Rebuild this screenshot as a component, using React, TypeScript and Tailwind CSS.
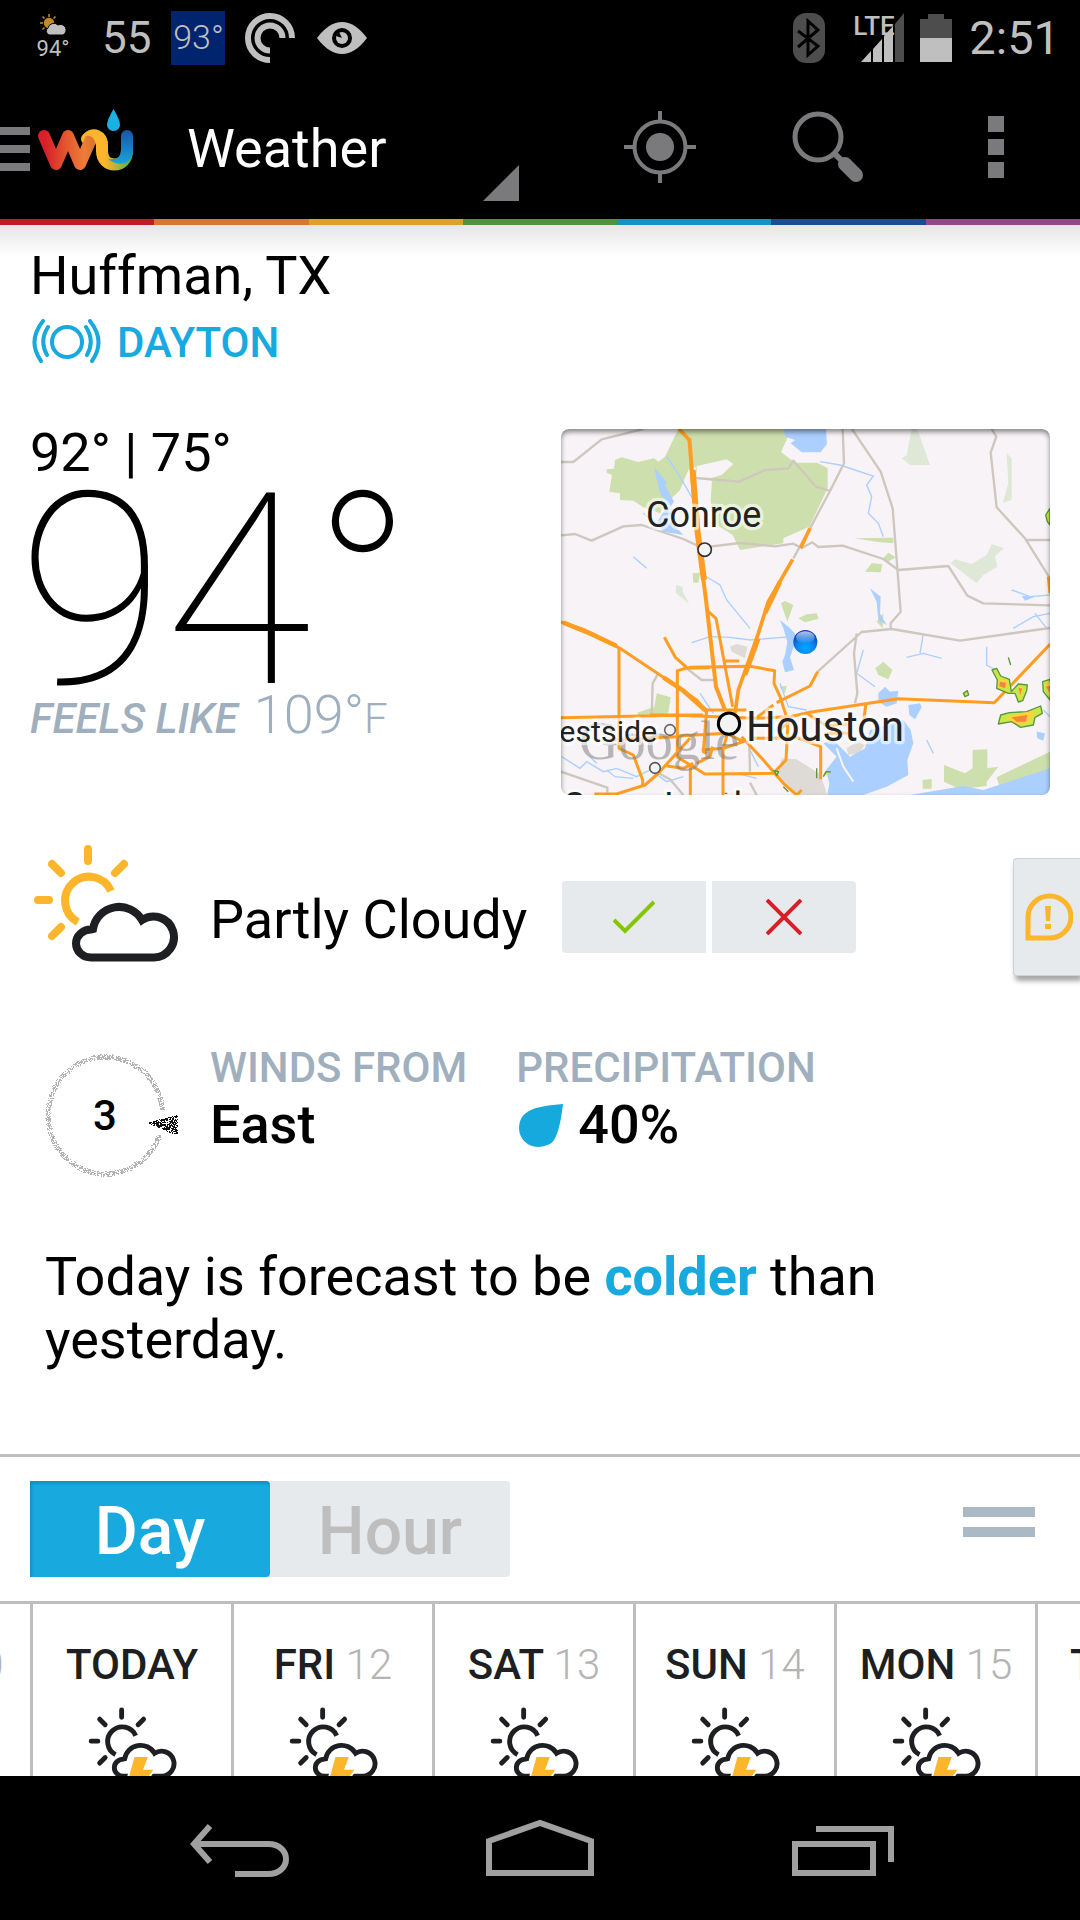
import { useMemo, useState } from 'react';
import clsx from 'clsx';

type Forecast = { day: string; date?: string };

const FORECAST: Forecast[] = [
  { day: 'WED', date: '10' },
  { day: 'TODAY' },
  { day: 'FRI', date: '12' },
  { day: 'SAT', date: '13' },
  { day: 'SUN', date: '14' },
  { day: 'MON', date: '15' },
  { day: 'TUE', date: '16' },
];

export default function App() {
  return (
    <div className="flex h-screen flex-col overflow-hidden bg-white font-['Roboto',sans-serif] text-black">
      <StatusBar />
      <ActionBar />
      <main className="relative flex min-h-0 flex-1 flex-col overflow-hidden">
        <div className="pointer-events-none absolute inset-x-0 top-0 h-8 bg-linear-to-b from-black/10 to-transparent" />
        <Location />
        <Current />
        <Conditions />
        <Wind />
        <p className="mt-[64px] pr-[30px] pl-[45px] text-[54px] leading-[63px]">
          Today is forecast to be <b className="font-bold text-[#18a9df]">colder</b> than yesterday.
        </p>
        <DailyForecast />
      </main>
      <NavBar />
    </div>
  );
}

function StatusBar() {
  return (
    <div className="flex h-[75px] shrink-0 items-center bg-black pr-[20px] pl-[34px] text-[#bfbfbf]">
      <div className="flex w-[38px] flex-col items-center">
        <svg viewBox="0 0 26 22" className="h-[22px] w-[26px]">
          <g stroke="#c28a24" strokeWidth="1.5">
            <circle cx="9" cy="9" r="4.5" fill="#c28a24" />
            <path d="M9 0v3M2.500 2.500l2 2M0 9h3M2.500 15.500l2-2M15.500 2.500l-2 2" />
          </g>
          <path d="M9 21a4 4 0 0 1-1-7 6 6 0 0 1 10-3 5 5 0 0 1 5 10z" fill="#bfbfbf" stroke="#000" />
        </svg>
        <span className="text-[22px] leading-[26px]">94°</span>
      </div>
      <span className="ml-[30px] text-[44px] leading-[50px]">55</span>
      <span className="ml-[20px] flex h-[54px] w-[54px] items-center justify-center bg-[#00246e] text-[34px] font-light">
        93°
      </span>
      <svg viewBox="0 0 50 50" className="ml-[20px] h-[50px] w-[50px]" fill="none" stroke="#bfbfbf" strokeWidth="6">
        <path d="M25 47A22 22 0 1 1 47 25" />
        <path d="M25 37.500A12.500 12.500 0 1 1 37.500 25" />
      </svg>
      <svg viewBox="0 0 50 32" className="ml-[22px] h-[32px] w-[50px]">
        <path d="M0 16Q12 0 25 0T50 16Q38 32 25 32T0 16z" fill="#bfbfbf" />
        <circle cx="25" cy="16" r="10" />
        <circle cx="25" cy="16" r="6" fill="#bfbfbf" />
        <path d="M25 16l-3-6-3 4z" />
      </svg>

      <svg viewBox="0 0 32 50" className="ml-auto h-[50px] w-[32px]" fill="none">
        <rect width="32" height="50" rx="13" fill="#4d4d4d" />
        <path d="M5 18l20 15-10 9V8l10 9L5 34" stroke="#000" strokeWidth="3" />
      </svg>
      <div className="relative ml-[28px]">
        <span className="absolute top-0 left-0 text-[26px] leading-[26px] font-medium">LTE</span>
        <svg viewBox="0 0 52 50" className="h-[50px] w-[52px]" fill="#bfbfbf">
          <path d="M8 49l10-11v11zM20 49V36l9-10v23zM31 49V23l9-10v36z" />
          <path d="M42 49V11l9-11v49z" fill="#4d4d4d" />
        </svg>
      </div>
      <svg viewBox="0 0 32 50" className="ml-[15px] h-[50px] w-[32px]">
        <path d="M0 6h8V1h16v5h8v20H0z" fill="#4d4d4d" />
        <path d="M0 25h32v24H0z" fill="#bfbfbf" />
      </svg>
      <time className="ml-[17px] text-[47px] leading-[50px]">2:51</time>
    </div>
  );
}

function Logo() {
  return (
    <svg viewBox="36 106 100 66" className="h-[66px] w-[100px]" fill="none" strokeLinecap="round" strokeLinejoin="round">
      <defs>
        <linearGradient id="warm" gradientUnits="userSpaceOnUse" x1="40" y1="0" x2="92" y2="0">
          <stop offset="0.100" stopColor="#d81f2a" />
          <stop offset="0.500" stopColor="#e2572f" />
          <stop offset="0.850" stopColor="#f07c36" />
          <stop offset="1" stopColor="#d9772f" />
        </linearGradient>
        <linearGradient id="lime" gradientUnits="userSpaceOnUse" x1="100" y1="0" x2="130" y2="0">
          <stop offset="0.150" stopColor="#fdb52c" />
          <stop offset="1" stopColor="#5eb147" />
        </linearGradient>
        <linearGradient id="cool" gradientUnits="userSpaceOnUse" x1="0" y1="130" x2="0" y2="165">
          <stop offset="0" stopColor="#1b57a8" />
          <stop offset="1" stopColor="#17a8df" />
        </linearGradient>
      </defs>
      <path d="M87 138Q92 133 97 135T102 145V150C102 168 127 168 127 150" stroke="url(#lime)" strokeWidth="12" />
      <path d="M44 135L56 163L68 135L80 163L91 138" stroke="url(#warm)" strokeWidth="12" />
      <path d="M85 135Q97 124 106 136Q108 139 108 150H96V144Q94 133 85 135z" fill="#fdb52c" />
      <path d="M121 135a6 6 0 0 1 12 0V149C133 161 122 168 108 158Q121 160 121 149z" fill="url(#cool)" />
      <path d="M113.500 108Q120 119 120 124a6.500 6 0 0 1-13 0Q107 119 113.500 108z" fill="#1cb0e2" />
    </svg>
  );
}

function ActionBar() {
  return (
    <header className="shrink-0 bg-black">
      <div className="flex h-[144px] items-center">
        <button aria-label="Open menu" className="flex items-center gap-[6px]">
          <span className="flex w-[30px] flex-col gap-[10px] pt-[3px]">
            <i className="h-[8px] bg-[#7a7a7c]" />
            <i className="h-[8px] bg-[#7a7a7c]" />
            <i className="h-[8px] bg-[#7a7a7c]" />
          </span>
          <span className="pb-[14px]">
            <Logo />
          </span>
        </button>
        <button className="ml-[51px] flex h-full flex-1 items-center justify-between text-[54px] text-white">
          <h1 className="pt-[3px]">Weather</h1>
          <svg viewBox="0 0 36 36" className="mb-[18px] h-[36px] w-[36px] self-end">
            <path d="M36 0V36H0z" fill="#7a7a7c" />
          </svg>
        </button>
        <button aria-label="My location" className="ml-[105px]">
          <svg viewBox="0 0 72 72" className="h-[72px] w-[72px]" fill="none" stroke="#7a7a7c" strokeWidth="4">
            <circle cx="36" cy="36" r="25.500" />
            <circle cx="36" cy="36" r="14" fill="#7a7a7c" stroke="none" />
            <path d="M36 0v10M36 62v10M0 36h10M62 36h10" />
          </svg>
        </button>
        <button aria-label="Search" className="ml-[96px]">
          <svg viewBox="0 0 72 72" className="h-[72px] w-[72px]" fill="none" stroke="#7a7a7c">
            <circle cx="26" cy="26" r="23" strokeWidth="5" />
            <path d="M41 41l9 9" strokeWidth="6" />
            <path d="M53 53l11 11" strokeWidth="14" strokeLinecap="round" />
          </svg>
        </button>
        <button aria-label="More options" className="mr-[76px] ml-[124px] flex flex-col gap-[7px]">
          <i className="h-[16px] w-[16px] bg-[#7a7a7c]" />
          <i className="h-[16px] w-[16px] bg-[#7a7a7c]" />
          <i className="h-[16px] w-[16px] bg-[#7a7a7c]" />
        </button>
      </div>
      <div className="grid h-[6px] grid-cols-7">
        <i className="bg-[#be1c26]" />
        <i className="bg-[#d6782f]" />
        <i className="bg-[#dca02b]" />
        <i className="bg-[#50903f]" />
        <i className="bg-[#1693c4]" />
        <i className="bg-[#154e92]" />
        <i className="bg-[#994689]" />
      </div>
    </header>
  );
}

function Location() {
  return (
    <section className="px-[30px] pt-[19px]">
      <h2 className="text-[54px] leading-[64px]">Huffman, TX</h2>
      <a href="#station" className="mt-[10px] flex items-center gap-[15px] text-[42px] leading-[50px] font-medium text-[#18a9df]">
        <svg viewBox="0 2 72 48" className="h-[48px] w-[72px]" fill="none" stroke="#18a9df" strokeWidth="4" strokeLinecap="round">
          <circle cx="37" cy="25" r="15" />
          <path d="M18 10Q9 24 17 38M13 4Q-3 24 11 44M56 10Q65 24 57 38M60 4Q76 24 62 44" />
        </svg>
        DAYTON
      </a>
    </section>
  );
}

function Current() {
  return (
    <section className="mt-[53px] flex items-start justify-between px-[30px]">
      <div>
        <p className="text-[54px] leading-[64px]">92° | 75°</p>
        <p className="mt-[14px] -ml-3 text-[268px] leading-[184px] font-thin">94°</p>
        <p className="flex items-baseline leading-[64px] text-[#a0afbd]">
          <span className="text-[42px] font-medium italic">FEELS LIKE</span>
          <span className="ml-[16px] text-[54px] font-light">109°</span>
          <span className="text-[42px] font-light">F</span>
        </p>
      </div>
      <RadarMap />
    </section>
  );
}

function RadarMap() {
  return (
    <div className="relative mt-2 h-[366px] w-[489px] shrink-0 overflow-hidden rounded-lg">
      <svg viewBox="33 27 1467 1098" className="h-full w-full" fill="none">
        <defs>
          <radialGradient id="pin" cx="0.500" cy="0.750" r="0.700">
            <stop offset="0" stopColor="#00a8ff" />
            <stop offset="0.500" stopColor="#0b84ee" />
            <stop offset="1" stopColor="#0b3db0" />
          </radialGradient>
          <linearGradient id="shine" x1="0" y1="0" x2="0" y2="1">
            <stop offset="0" stopColor="#fff" stopOpacity="0.700" />
            <stop offset="1" stopColor="#fff" stopOpacity="0" />
          </linearGradient>
        </defs>
        <path d="M33 27H1500V1125H33z" fill="#f7f3f7" />

        {/* Parks and forest */}
        <g fill="#cddfac">
          <path d="M425 27H705L712 55L693 96L735 128H802L833 145V205L778 320L700 355V370L570 390L548 345L490 308L482 240L486 182L440 170L437 140L415 150L390 210L350 250L330 280L280 262L250 242L210 240V220L178 215L186 165L170 158V148L192 146L195 120L215 112L265 126L312 115L325 125L345 110L385 27z" />
          <path d="M693 550L705 543L730 555L712 605zM745 595L770 583L800 580L806 596L765 607zM912 355L1030 353V370L985 366zM945 455L965 430L997 433L992 457zM1000 415L1015 398L1037 412L1015 425zM428 460L450 458L445 488H430zM320 820L362 832L355 880L312 868zM976 745L1000 725L1027 750L1015 778L985 765zM980 605L1000 580L998 625zM262 878L310 862L362 885H265zM688 800L710 797L705 820z" />
          <path d="M1182 1035L1245 1060L1268 1045V990L1312 988V1045L1345 1040L1310 1085V1098L1230 1108L1182 1085zM1340 1072L1500 995V1050L1350 1103zM1118 1080L1145 1077V1106H1118z" />
        </g>
        <path d="M1085 27H1102L1140 135H1080L1055 115L1070 105zM1202 430L1215 418L1265 432L1310 405L1325 372L1362 385L1335 408L1342 440L1300 465L1280 490zM1370 100L1385 115V240L1358 248L1365 225L1375 190zM378 495L398 500V515L418 552L378 520z" fill="#dfe8d6" />
        <path d="M440 138L530 118L550 132L515 165L470 178L440 172z" fill="#f7f3f7" />
        <path d="M695 1015L740 1018L810 1062L832 1125H740L680 1075zM890 985L920 965L945 975L925 1000L895 1005zM540 680L560 672L592 680L585 715L545 695z" fill="#dedad5" />

        {/* Water */}
        <g fill="#abcfff">
          <path d="M702 27H828L831 72L812 97H755L722 70L735 60L705 50zM312 142L350 185L345 195L372 245L360 262L330 220z" />
          <path d="M690 600L715 620L735 640V670L720 712L732 750L705 757L697 725L705 705L712 665L700 625z" />
          <path d="M820 970L850 960L900 1010L945 985L960 930L1060 900L1082 930L1090 970L1072 1020L1075 1065L1010 1100L940 1125H832L838 1090L828 1050L860 1010z" />
          <path d="M1080 1125L1240 1098L1300 1110L1500 1045V1125zM1075 855L1110 850L1115 862L1095 898L1078 885zM960 505L992 530L990 580L1010 615L985 600L980 545zM985 820L1005 800L1020 815L1045 812L1040 850L1010 860L985 845zM1460 935L1485 940L1480 962L1462 955zM1415 527L1455 530L1425 542zM350 260L375 270L372 315L400 345L340 335L320 310z" />
        </g>
        <path d="M860 985L880 1040L910 1085" stroke="#f7f3f7" strokeWidth="6" />
        <g stroke="#abcfff" strokeWidth="4">
          <path d="M810 125L870 135L970 168L950 195L965 230L955 280L985 310L1000 350M460 465L510 495L530 540L600 625M425 668L480 650L540 652L600 660L725 650M250 410L290 445M1070 712L1120 700L1175 715M1310 680V735L1338 750M1390 625L1450 590L1500 580M1455 580L1490 625M1385 510L1440 530L1500 525M280 280L335 325L360 330M350 110L390 170L430 240L440 270M450 820L490 880" />
          <path d="M35 1010L90 1045L110 1025L160 1055L200 1045L260 1070L300 1050L350 1085L400 1070M170 1050L195 1070L250 1075M120 1010L140 1030M560 1060L620 1075M600 990L625 1040M690 790L715 860L770 870M850 900L860 950" />
          <path d="M940 690L920 760L975 800M1120 640L1110 700M1130 960L1150 1000M1480 870L1500 890" />
        </g>

        {/* Minor roads */}
        <g stroke="#cdc7be" strokeWidth="7" strokeLinejoin="round">
          <path d="M33 126H70L155 58L280 27M437 174L568 185L645 150L715 145L730 122L798 200L840 213L882 130L878 27M840 213L780 325L730 415M906 27L992 155L1028 265L1042 445L1052 575L1022 610V627" />
          <path d="M33 346L75 342L125 362L220 319L275 315L400 357L455 383L570 369L675 379L730 371L755 384L787 367L805 381L878 377L1000 417L1045 450L1195 438L1252 527L1300 550L1500 556" />
          <path d="M1325 27L1339 50L1322 98L1340 262L1425 355L1500 475M1430 360H1500M803 755L935 636L1025 627L1230 662L1500 624M920 640L912 700L922 820L915 850M325 760L308 790L305 890M410 745L455 780H492M33 1055L172 1103V1125M325 1060L360 1078L400 1125M598 970L600 1055M600 1088L620 1125" />
        </g>

        {/* Highways */}
        <g stroke="#ff9d22" strokeWidth="9" strokeLinejoin="round">
          <path d="M387 27L418 60" strokeWidth="11" />
          <path d="M418 55L430 210L450 400L468 540L498 800L525 870" strokeWidth="12" />
          <path d="M428 150L442 330L462 480" strokeWidth="18" />
          <path d="M780 325L752 384M728 418L655 545L625 640L565 810L555 880" strokeWidth="11" />
          <path d="M690 485L645 580M625 655L585 765" strokeWidth="14" />
          <path d="M33 606L100 628L210 685L330 765L440 840L470 875" />
          <path d="M40 608L120 640L200 678M340 772L400 812L468 872" strokeWidth="14" />
          <path d="M475 575L498 595L548 860M525 723H568M343 652L376 712L410 742M207 685V985L250 1005L278 1080V1095" />
          <path d="M382 1010V752L420 742L600 739L674 752L672 790L690 830L714 905L708 1020L670 1060L465 1062L380 1010M400 745L480 743" />
          <path d="M680 848L780 798L803 755M33 893L380 886L500 890L620 895L720 890L780 877L1045 836L1333 848L1500 673M300 885H460" />
          <path d="M470 1000L460 995L470 870H590M455 990L520 985L580 965L530 940L380 948M180 960L380 950M620 893L670 855M575 950L640 1020L700 1090L740 1125L755 1110M610 955L740 953L812 980V1078M770 880L830 918L890 912M830 940H900M948 850L940 910M720 900L690 930" />
          <path d="M133 1122H200L285 1095L325 1060L420 955M350 1038L400 1045L430 1030M421 1030V1125M519 985V1125M488 980L480 1010L440 1030M535 930L520 985M1495 470L1500 520" />
        </g>

        {/* Radar returns */}
        <g fill="#c8e848" stroke="#5c9440" strokeWidth="4" strokeLinejoin="round">
          <path d="M1326 750L1340 745L1352 768L1378 778L1384 815L1405 792L1432 795L1430 812L1418 842L1405 846L1395 820L1375 820L1340 805L1342 780z" />
          <path d="M1345 912L1352 885L1378 878L1430 875L1472 858L1477 880L1455 892L1450 915L1412 922L1385 905z" />
          <path d="M1500 778L1478 785L1480 815L1500 840zM1500 265L1487 285L1492 305L1500 315zM1240 820L1252 812L1256 825L1245 830zM1375 712L1382 735M672 1052L686 1055L680 1066zM820 1070L828 1055L842 1056M700 1100L715 1115M800 1045V1075M524 1120H532" />
        </g>
        <path d="M1345 775L1372 782L1375 805L1345 802zM1405 800L1420 800L1412 835zM1365 895L1400 882L1455 872L1440 905L1410 915zM1485 792L1500 785V830z" fill="#fbd23c" />
        <path d="M1350 785L1368 788L1365 805L1348 798zM1385 892L1432 885L1428 905L1400 905zM1488 800L1500 797V820zM1406 805L1416 805L1411 825z" fill="#f5853a" />

        <circle cx="766" cy="666" r="36" fill="url(#pin)" />
        <ellipse cx="766" cy="652" rx="28" ry="18" fill="url(#shine)" />

        {/* Town labels */}
        <text x="88" y="1018" fontSize="163" fill="#777" fillOpacity="0.500" fontFamily="Liberation Serif, serif">Google</text>
        <g fontFamily="Roboto, sans-serif" fill="#222" stroke="#fff" strokeOpacity="0.600" strokeWidth="20" strokeLinejoin="round" paintOrder="stroke">
          <text x="288" y="320" fontSize="108">Conroe</text>
          <text x="588" y="963" fontSize="125">Houston</text>
          <text x="28" y="966" fontSize="91">estside</text>
          <text x="42" y="1192" fontSize="106">Sugar Land</text>
        </g>
        <g fill="#f3f3f3">
          <circle cx="464" cy="389" r="20" stroke="#333" strokeWidth="5" />
          <circle cx="537" cy="911" r="32" stroke="#000" strokeWidth="9" />
          <circle cx="360" cy="930" r="16" stroke="#666" strokeWidth="5" />
          <circle cx="315" cy="1044" r="16" stroke="#555" strokeWidth="5" />
        </g>
      </svg>
      <div className="pointer-events-none absolute inset-0 rounded-lg shadow-[inset_0_3px_5px_rgba(0,0,0,0.45)]" />
    </div>
  );
}

function SkyIcon({ storm, className }: { storm?: boolean; className: string }) {
  return (
    <svg viewBox="0 0 150 146" className={className} fill="none" strokeWidth="8">
      <g stroke={storm ? '#1e1f22' : '#fdb52c'} strokeLinecap="round">
        <path d="M81 47A24 24 0 1 0 48 78" strokeLinecap="butt" />
        <path d="M58 5v12M22 20l9 9M94 20l-9 9M8 56h11M22 92l9-9" />
      </g>
      <path
        d="M61 113.500A15 14 0 0 1 61 85.500L63 85A26.500 26.500 0 0 1 112 76A20.500 20.500 0 1 1 124 113.500z"
        stroke="#1e1f22"
      />
      {storm && <path d="M79 82h22l-8 21h17l-28 40 5-28H70z" fill="#fdb52c" stroke="#fff" strokeWidth="6" paintOrder="stroke" />}
    </svg>
  );
}

function Conditions() {
  return (
    <section className="mt-[49px] flex items-center pl-[30px]">
      <SkyIcon className="h-[146px] w-[150px] shrink-0" />
      <p className="ml-[30px] pt-[6px] text-[54px] leading-[64px]">Partly Cloudy</p>
      <div className="ml-[35px] flex gap-[6px]">
        <button aria-label="Report is right" className="flex h-[72px] w-[144px] items-center justify-center rounded-l-sm bg-[#e6eaed]">
          <svg viewBox="0 0 42 34" className="h-[34px] w-[42px]" fill="none" stroke="#88c400" strokeWidth="4">
            <path d="M1 20l11 11L41 2" />
          </svg>
        </button>
        <button aria-label="Report is wrong" className="flex h-[72px] w-[144px] items-center justify-center rounded-r-sm bg-[#e6eaed]">
          <svg viewBox="0 0 36 36" className="h-[36px] w-[36px]" fill="none" stroke="#d81f27" strokeWidth="4">
            <path d="M1 1l34 34M35 1L1 35" />
          </svg>
        </button>
      </div>
      <button
        aria-label="Send a report"
        className="ml-auto flex h-[118px] w-[67px] items-center rounded-l-sm border border-r-0 border-[#cfd3d6] bg-[#e6eaed] pl-[11px] shadow-[2px_5px_5px_rgba(0,0,0,0.35)]"
      >
        <svg viewBox="0 0 48 48" className="h-[48px] w-[48px]" fill="none" stroke="#fdb52c" strokeWidth="5">
          <path d="M3 45V24A21.500 21 0 1 1 24 45z" />
          <path d="M20 13h6l-1 15h-4zM20 31h6v5h-6z" fill="#fdb52c" stroke="none" />
        </svg>
      </button>
    </section>
  );
}

function seeded(seed: number) {
  let s = seed;
  return () => {
    s = (s * 16807) % 2147483647;
    return s / 2147483647;
  };
}

function WindDial({ speed }: { speed: number }) {
  // grainy ring and pointer, one 1px square per grain
  const { ring, pointer } = useMemo(() => {
    const rand = seeded(77);
    let ring = '';
    for (let i = 0; i < 1500; i++) {
      const a = rand() * Math.PI * 2;
      const r = 56 + rand() * 5;
      const x = Math.round(75 + Math.cos(a) * r * 0.98);
      const y = Math.round(64 + Math.sin(a) * r);
      if (x > 122 && y > 58 && y < 84) continue;
      ring += `M${x} ${y}h1v1h-1z`;
    }
    let pointer = '';
    for (let i = 0; i < 360; i++) {
      const t = Math.sqrt(rand());
      const x = Math.round(116 + t * 31);
      const y = Math.round(71 + t * (rand() * 20 - 7));
      pointer += `M${x} ${y}h1v1h-1z`;
    }
    return { ring, pointer };
  }, []);

  return (
    <svg viewBox="0 0 150 130" className="mt-2 h-[130px] w-[150px] shrink-0">
      <path d={ring} fill="#b4b4b4" />
      <path d={pointer} fill="#111" />
      <text x="75" y="79" textAnchor="middle" fontSize="42" fontWeight="500" fontFamily="Roboto, sans-serif">
        {speed}
      </text>
    </svg>
  );
}

function Wind() {
  return (
    <section className="mt-[53px] flex items-start px-[30px]">
      <WindDial speed={3} />
      <dl className="ml-[30px] flex gap-[49px] font-medium">
        <div>
          <dt className="text-[42px] leading-[50px] text-[#a0afbd]">WINDS FROM</dt>
          <dd className="text-[54px] leading-[64px]">East</dd>
        </div>
        <div>
          <dt className="text-[42px] leading-[50px] text-[#a0afbd]">PRECIPITATION</dt>
          <dd className="flex items-center gap-[15px] pl-[3px] text-[54px] leading-[64px]">
            <svg viewBox="0 0 44 43" className="h-[43px] w-[44px]">
              <path d="M44 0Q40 35 31 40Q24 43 19 43A19 19 0 0 1 0 24Q0 9 17 4Q28 1 44 0z" fill="#16a9dd" />
            </svg>
            40%
          </dd>
        </div>
      </dl>
    </section>
  );
}

function DailyForecast() {
  const [mode, setMode] = useState<'Day' | 'Hour'>('Day');

  return (
    <section className="mt-[83px] shrink-0">
      <div className="flex items-center justify-between border-y-3 border-[#bebebe] pt-[24px] pr-[45px] pb-[24px] pl-[30px]">
        <div className="flex rounded-sm bg-[#e6eaed]">
          {(['Day', 'Hour'] as const).map((m) => (
            <button
              key={m}
              aria-pressed={mode === m}
              onClick={() => setMode(m)}
              className={clsx(
                'h-[96px] w-[240px] rounded-r-sm pt-[5px] text-[66px] leading-[80px] font-medium',
                mode === m
                  ? 'bg-[#18a9df] text-white shadow-[inset_2px_3px_3px_rgba(0,0,0,0.15)]'
                  : 'text-[#bebebe]',
              )}
            >
              {m}
            </button>
          ))}
        </div>
        <button aria-label="Drag forecast" className="mb-[14px] flex w-[72px] flex-col gap-[10px]">
          <i className="h-[10px] bg-[#abb9c5]" />
          <i className="h-[10px] bg-[#abb9c5]" />
        </button>
      </div>
      {/* scrolled so that today sits at the left edge */}
      <ol className="-ml-[168px] flex">
        {FORECAST.map((f) => (
          <li key={f.day} className="flex w-[201px] shrink-0 flex-col items-center border-r-3 border-[#bebebe] pt-[36px]">
            <p className="text-[42px] leading-[50px] font-medium whitespace-nowrap text-[#1e1f22]">
              {f.day} {f.date && <span className="font-light text-[#b4b4b4]">{f.date}</span>}
            </p>
            <SkyIcon storm className="mt-[17px] h-[89px] w-[92px]" />
          </li>
        ))}
      </ol>
    </section>
  );
}

function NavBar() {
  return (
    <nav className="grid h-[144px] shrink-0 grid-cols-3 items-center justify-items-center bg-black px-[90px]">
      <button aria-label="Back">
        <svg viewBox="0 0 100 58" className="h-[58px] w-[100px]" fill="none" stroke="#a0a0a0" strokeWidth="6">
          <path d="M20 7L4 25L20 43M5 25H78C102 25 102 55 78 55H45" />
        </svg>
      </button>
      <button aria-label="Home">
        <svg viewBox="0 0 108 58" className="h-[58px] w-[108px]" fill="none" stroke="#a0a0a0" strokeWidth="6">
          <path d="M3 54V22L54 4L105 22V54z" />
        </svg>
      </button>
      <button aria-label="Recent apps">
        <svg viewBox="-6 0 108 58" className="h-[58px] w-[108px]" fill="none" stroke="#a0a0a0" strokeWidth="6">
          <path d="M3 25H81V54H3zM24 10H99V43" />
        </svg>
      </button>
    </nav>
  );
}
